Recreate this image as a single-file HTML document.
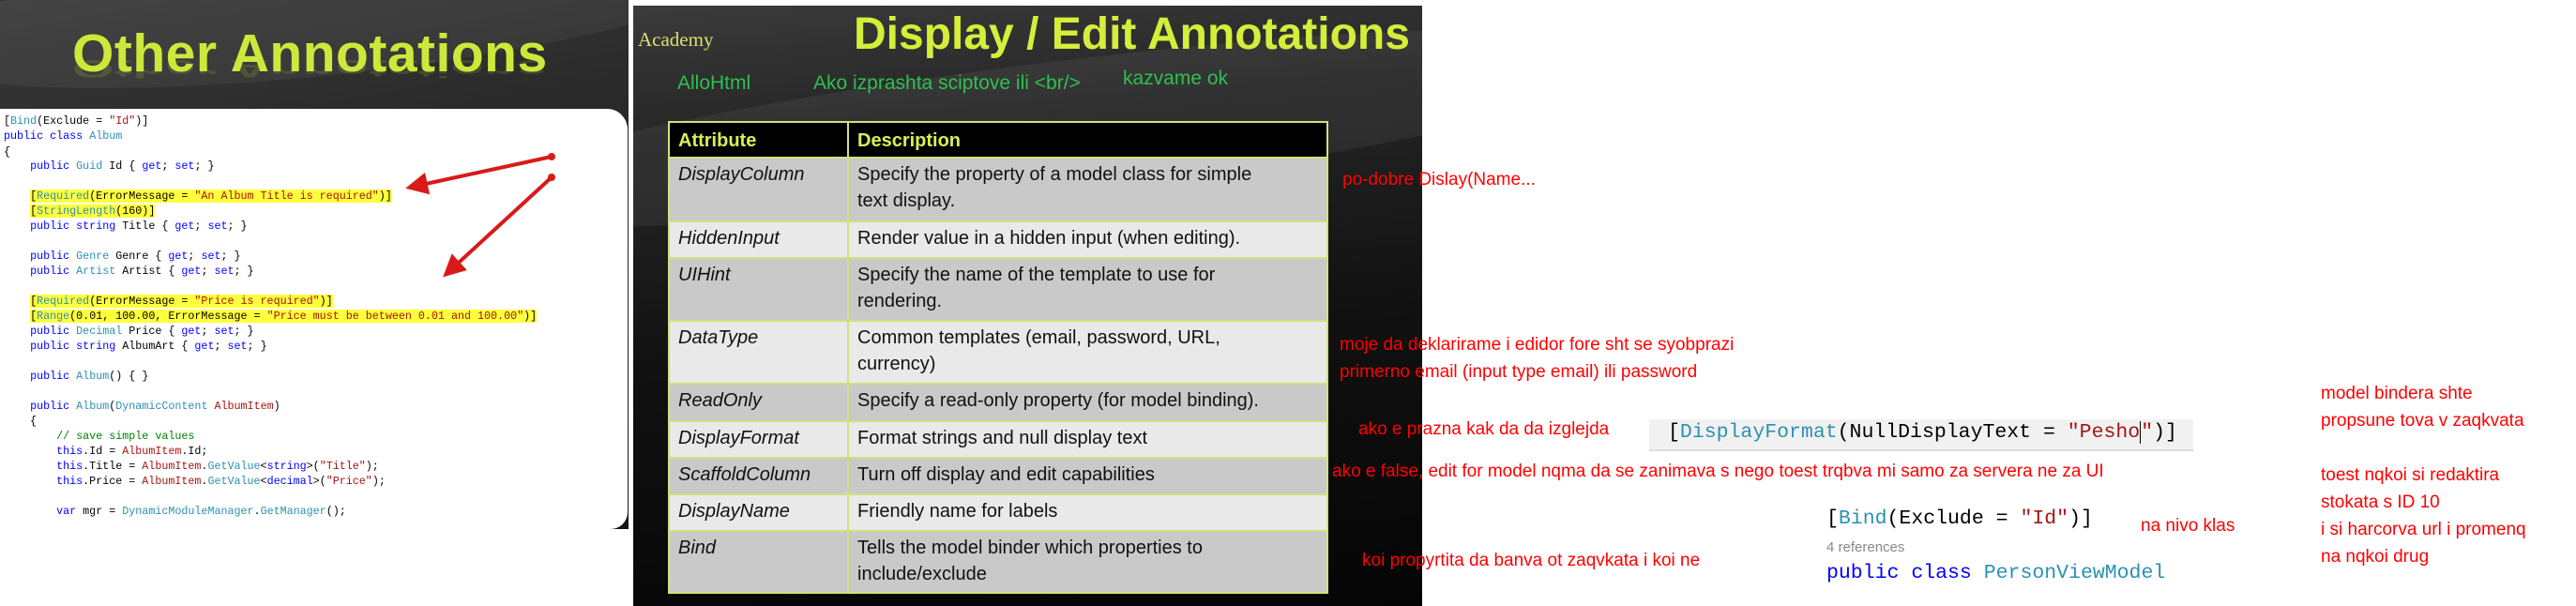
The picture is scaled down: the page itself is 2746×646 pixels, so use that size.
<!DOCTYPE html>
<html><head><meta charset="utf-8"><style>
*{margin:0;padding:0;box-sizing:border-box}
body{width:2746px;height:638px;background:#fff;position:relative;overflow:hidden;font-family:"Liberation Sans",sans-serif}
.a{position:absolute;white-space:nowrap}
#p1{left:0;top:0;width:670px;height:564px;background:linear-gradient(170deg,#3a3a3a 0%,#2a2a2a 30%,#161616 100%);overflow:hidden}
#code{left:0;top:116px;width:669px;height:448px;background:#fff;border-radius:0 22px 18px 0;font-family:"Liberation Mono",monospace;font-size:11.7px;color:#000}
#code div{position:absolute;white-space:pre;left:4px;height:16px;line-height:16px}
.k{color:#0000ff}.t{color:#2b91af}.s{color:#a31515}.c{color:#008000}
.hl{background:#ffff3c}
#p2{left:675px;top:6px;width:841px;height:640px;background:linear-gradient(175deg,#3b3b3b 0%,#262626 20%,#111 55%,#050505 100%);overflow:hidden}
table{position:absolute;left:712px;top:129px;width:704px;border-collapse:collapse;font-family:"Liberation Sans",sans-serif}
td,th{border:2px solid #cfe27a;vertical-align:top;text-align:left;padding:3px 9px 0 9px;font-size:20px;line-height:28px;color:#111}
th{background:#000;color:#d9ee55;font-weight:bold;height:38px;padding-top:5px}
td:first-child{font-style:italic;width:191px}
tr.d td{background:#c9c9c9}tr.l td{background:#e9e9e9}
.g{color:#2fbf4f;font-size:21px}
.r{color:#f00;font-size:19px}
</style></head><body>
<div id="p1" class="a">
 <div class="a" style="left:-100px;top:-60px;width:900px;height:140px;border-radius:50%;background:rgba(255,255,255,0.05);transform:rotate(-6deg)"></div>
 <div class="a" style="left:77px;top:24px;font-size:57px;font-weight:bold;color:#cde83a;letter-spacing:0.5px">Other Annotations</div>
 <div class="a" style="left:77px;top:88px;font-size:57px;font-weight:bold;color:#cde83a;opacity:0.15;transform:scaleY(-0.45);transform-origin:top;letter-spacing:0.5px;height:30px">Other Annotations</div>
</div>
<div id="code" class="a">
<div style="top:5px">[<span class="t">Bind</span>(Exclude = <span class="s">"Id"</span>)]</div>
<div style="top:21px"><span class="k">public class</span> <span class="t">Album</span></div>
<div style="top:38px">{</div>
<div style="top:53px">    <span class="k">public</span> <span class="t">Guid</span> Id { <span class="k">get</span>; <span class="k">set</span>; }</div>
<div style="top:85px">    <span class="hl">[<span class="t">Required</span>(ErrorMessage = <span class="s">"An Album Title is required"</span>)]</span></div>
<div style="top:101px">    <span class="hl">[<span class="t">StringLength</span>(160)]</span></div>
<div style="top:117px">    <span class="k">public string</span> Title { <span class="k">get</span>; <span class="k">set</span>; }</div>
<div style="top:149px">    <span class="k">public</span> <span class="t">Genre</span> Genre { <span class="k">get</span>; <span class="k">set</span>; }</div>
<div style="top:165px">    <span class="k">public</span> <span class="t">Artist</span> Artist { <span class="k">get</span>; <span class="k">set</span>; }</div>
<div style="top:197px">    <span class="hl">[<span class="t">Required</span>(ErrorMessage = <span class="s">"Price is required"</span>)]</span></div>
<div style="top:213px">    <span class="hl">[<span class="t">Range</span>(0.01, 100.00, ErrorMessage = <span class="s">"Price must be between 0.01 and 100.00"</span>)]</span></div>
<div style="top:229px">    <span class="k">public</span> <span class="t">Decimal</span> Price { <span class="k">get</span>; <span class="k">set</span>; }</div>
<div style="top:245px">    <span class="k">public string</span> AlbumArt { <span class="k">get</span>; <span class="k">set</span>; }</div>
<div style="top:277px">    <span class="k">public</span> <span class="t">Album</span>() { }</div>
<div style="top:309px">    <span class="k">public</span> <span class="t">Album</span>(<span class="t">DynamicContent</span> <span class="s">AlbumItem</span>)</div>
<div style="top:325px">    {</div>
<div style="top:341px">        <span class="c">// save simple values</span></div>
<div style="top:357px">        <span class="k">this</span>.Id = <span class="s">AlbumItem</span>.Id;</div>
<div style="top:373px">        <span class="k">this</span>.Title = <span class="s">AlbumItem</span>.<span class="t">GetValue</span>&lt;<span class="k">string</span>&gt;(<span class="s">"Title"</span>);</div>
<div style="top:389px">        <span class="k">this</span>.Price = <span class="s">AlbumItem</span>.<span class="t">GetValue</span>&lt;<span class="k">decimal</span>&gt;(<span class="s">"Price"</span>);</div>
<div style="top:421px">        <span class="k">var</span> mgr = <span class="t">DynamicModuleManager</span>.<span class="t">GetManager</span>();</div>
</div>
<svg class="a" style="left:0;top:0" width="670" height="564">
 <defs><marker id="ah" markerWidth="6" markerHeight="6" refX="4" refY="3" orient="auto"><path d="M0,0 L6,3 L0,6 z" fill="#d91a1a"/></marker></defs>
 <line x1="588" y1="167" x2="440" y2="199" stroke="#d91a1a" stroke-width="4" marker-end="url(#ah)"/>
 <line x1="588" y1="189" x2="478" y2="290" stroke="#d91a1a" stroke-width="4" marker-end="url(#ah)"/>
 <circle cx="588" cy="167" r="4" fill="#d91a1a"/><circle cx="588" cy="189" r="4" fill="#d91a1a"/>
</svg>
<div id="p2" class="a">
 <div class="a" style="left:-200px;top:60px;width:1300px;height:140px;border-radius:50%;background:rgba(255,255,255,0.06);transform:rotate(-7deg)"></div>
</div>
<div class="a" style="left:680px;top:30px;font-family:'Liberation Serif',serif;font-size:21px;color:#d8e070">Academy</div>
<div class="a" style="left:910px;top:9px;font-size:48px;font-weight:bold;color:#d4ee3a">Display / Edit Annotations</div>
<div class="a g" style="left:722px;top:77px">AlloHtml</div>
<div class="a g" style="left:867px;top:77px">Ako izprashta sciptove ili &lt;br/&gt;</div>
<div class="a g" style="left:1197px;top:72px">kazvame ok</div>
<table>
<tr><th style="width:191px">Attribute</th><th>Description</th></tr>
<tr class="d" style="height:68px"><td>DisplayColumn</td><td>Specify the property of a model class for simple<br>text display.</td></tr>
<tr class="l" style="height:39px"><td>HiddenInput</td><td>Render value in a hidden input (when editing).</td></tr>
<tr class="d" style="height:67px"><td>UIHint</td><td>Specify the name of the template to use for<br>rendering.</td></tr>
<tr class="l" style="height:67px"><td>DataType</td><td>Common templates (email, password, URL,<br>currency)</td></tr>
<tr class="d" style="height:40px"><td>ReadOnly</td><td>Specify a read-only property (for model binding).</td></tr>
<tr class="l" style="height:39px"><td>DisplayFormat</td><td>Format strings and null display text</td></tr>
<tr class="d" style="height:39px"><td>ScaffoldColumn</td><td>Turn off display and edit capabilities</td></tr>
<tr class="l" style="height:39px"><td>DisplayName</td><td>Friendly name for labels</td></tr>
<tr class="d" style="height:66px"><td>Bind</td><td>Tells the model binder which properties to<br>include/exclude</td></tr>
</table>
<div class="a r" style="left:1431px;top:181px">po-dobre Dislay(Name...</div>
<div class="a r" style="left:1428px;top:357px">moje da deklarirame i edidor fore sht se syobprazi</div>
<div class="a r" style="left:1428px;top:386px">primerno email (input type email) ili password</div>
<div class="a r" style="left:1448px;top:447px">ako e prazna kak da da izglejda</div>
<div class="a r" style="left:1420px;top:492px">ako e false, edit for model nqma da se zanimava s nego toest trqbva mi samo za servera ne za UI</div>
<div class="a r" style="left:1452px;top:587px">koi propyrtita da banva ot zaqvkata i koi ne</div>
<div class="a" style="left:1758px;top:447px;width:580px;height:34px;background:#f1f1f1;border-bottom:2px solid #ddd"></div>
<div class="a" style="left:1778px;top:449px;font-family:'Liberation Mono',monospace;font-size:21.5px;color:#000">[<span style="color:#2b91af">DisplayFormat</span>(NullDisplayText = <span style="color:#a31515">"Pesho</span><span style="border-left:1px solid #000"></span><span style="color:#a31515">"</span>)]</div>
<div class="a" style="left:1947px;top:541px;font-family:'Liberation Mono',monospace;font-size:21.5px;color:#000">[<span style="color:#2b91af">Bind</span>(Exclude = <span style="color:#a31515">"Id"</span>)]</div>
<div class="a" style="left:1947px;top:575px;font-size:15px;color:#888">4 references</div>
<div class="a" style="left:1947px;top:599px;font-family:'Liberation Mono',monospace;font-size:21.5px;color:#0000ff">public class <span style="color:#2b91af">PersonViewModel</span></div>
<div class="a r" style="left:2282px;top:550px">na nivo klas</div>
<div class="a r" style="left:2474px;top:409px">model bindera shte</div>
<div class="a r" style="left:2474px;top:438px">propsune tova v zaqkvata</div>
<div class="a r" style="left:2474px;top:496px">toest nqkoi si redaktira</div>
<div class="a r" style="left:2474px;top:525px">stokata s ID 10</div>
<div class="a r" style="left:2474px;top:554px">i si harcorva url i promenq</div>
<div class="a r" style="left:2474px;top:583px">na nqkoi drug</div>
</body></html>
